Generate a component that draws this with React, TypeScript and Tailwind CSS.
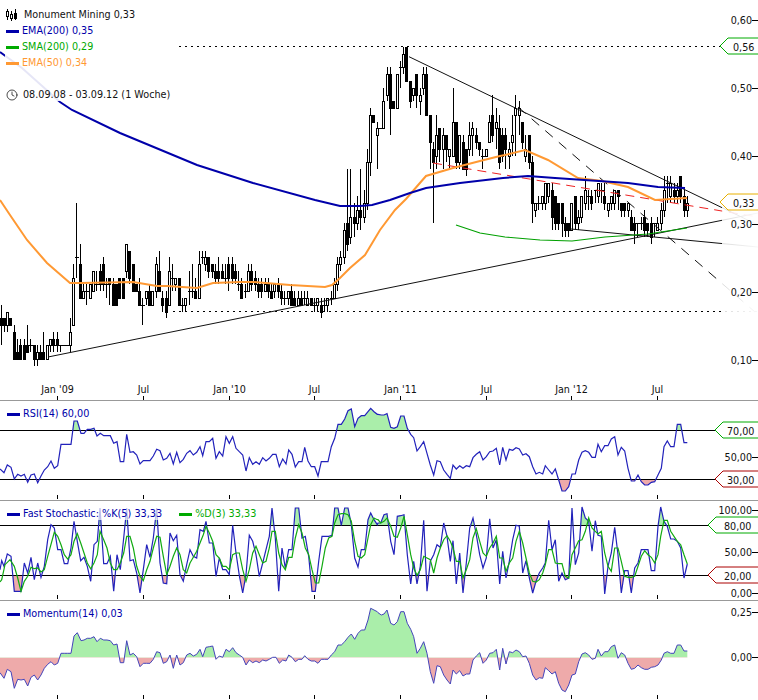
import { Clock } from "lucide-react";

const BLUE = "#0000aa";
const GREEN = "#00aa00";
const ORANGE = "#ff9933";
const UP = "#aaeeaa";
const DOWN = "#eeaaaa";

const TICKS = [57.5, 143.5, 229.5, 314.5, 400.5, 486.5, 571.5, 657.5];

// weekly candles in cents: open, close, high, low
const CANDLES: number[][] = [
  [16,15,18,12],[16,15,16,14],[15,17,17,14],[16,15,16,15],[14,10,15,10],[11,10,13,10],[12,10,13,10],[12,10,13,10],[12,11,15,11],[12,12,13,11],
  [12,10,12,9],[10,11,12,9],[11,10,12,10],[11,10,14,10],[10,12,12,10],[12,13,13,11],[13,12,14,11],[13,12,14,11],[12,12,12,11],[12,12,12,12],
  [12,12,12,12],[12,14,16,11],[15,22,24,15],[25,25,33,22],[24,19,27,19],[19,20,21,19],[20,20,21,18],[19,21,21,19],[20,23,23,20],[21,21,23,20],
  [23,21,24,20],[24,21,25,20],[21,21,22,19],[22,21,22,18],[21,18,22,18],[21,18,21,18],[22,19,22,19],[22,19,22,19],[23,27,27,22],[26,22,26,21],
  [24,20,24,20],[21,20,21,20],[20,18,22,18],[18,18,19,15],[19,20,20,18],[20,18,21,18],[18,20,20,18],[20,24,25,19],[23,20,26,20],[19,18,20,17],
  [19,17,20,16],[18,23,25,18],[22,22,24,20],[21,22,22,20],[22,18,22,18],[18,18,19,17],[18,19,19,17],[20,20,23,18],[20,20,24,19],[20,19,22,19],
  [19,24,26,19],[25,25,26,24],[24,25,26,23],[25,23,25,22],[24,23,24,22],[23,22,24,21],[23,22,25,21],[23,22,24,22],[22,22,24,21],[24,22,25,20],
  [24,22,25,21],[23,22,24,21],[21,21,23,20],[21,19,22,19],[20,20,21,19],[20,23,24,20],[23,21,24,20],[22,21,23,20],[21,20,22,19],[21,20,22,19],
  [20,21,22,20],[21,20,22,19],[20,19,21,19],[20,21,21,19],[21,20,22,19],[20,19,21,18],[19,19,20,18],[19,20,20,18],[20,18,21,18],[19,18,20,18],
  [18,19,20,18],[19,18,20,18],[19,19,20,18],[18,19,20,18],[19,18,19,18],[18,18,19,17],[18,19,19,17],[18,17,19,16],[18,18,19,17],[18,19,19,17],
  [19,19,20,18],[19,21,22,19],[21,24,25,20],[24,25,26,23],[25,29,30,24],[30,27,38,26],[28,31,38,27],[31,30,33,28],[30,32,34,29],[32,31,38,29],
  [31,33,35,30],[33,39,41,32],[39,46,47,37],[46,45,46,45],[43,44,45,38],[44,44,44,44],[44,48,50,44],[49,52,53,48],[52,47,53,43],[48,47,48,47],
  [47,52,52,47],[53,53,54,50],[53,55,56,52],[56,51,56,51],[51,48,51,47],[49,50,50,48],[52,49,52,47],[48,49,50,46],[50,52,53,49],[52,46,53,46],
  [46,42,46,38],[41,39,42,30],[40,43,46,38],[44,41,44,39],[41,43,44,38],[43,41,43,39],[40,41,41,38],[40,45,50,40],[45,39,45,38],[39,43,43,38],
  [42,38,43,38],[41,38,41,37],[41,43,45,40],[43,44,45,40],[43,42,44,41],[42,41,42,40],[40,40,41,38],[40,41,41,40],[42,45,46,42],[46,43,49,42],
  [44,45,47,41],[44,39,46,38],[43,40,44,39],[43,41,44,38],[40,41,42,38],[42,43,46,40],[46,47,49,40],[46,47,48,43],[45,42,45,41],[40,41,43,39],
  [43,39,43,38],[39,33,40,30],[32,33,33,31],[33,33,34,32],[33,34,34,32],[33,36,36,32],[34,36,36,33],[35,31,36,29],[34,30,34,29],[33,30,33,29],
  [33,30,33,28],[30,29,31,28],[30,29,30,28],[29,33,33,29],[34,30,34,29],[30,31,32,29],[31,34,34,30],[33,35,37,32],[34,34,35,32],[34,33,35,32],
  [35,35,35,33],[34,36,36,33],[35,35,36,33],[34,33,36,32],[32,33,33,31],[33,34,34,32],[33,35,35,32],[35,34,35,32],[33,32,33,31],[33,32,33,31],
  [32,33,33,31],[31,29,32,29],[30,29,31,27],[30,30,30,28],[30,30,31,29],[31,29,32,28],[30,29,30,28],[30,28,31,27],[30,30,30,28],[29,30,31,29],
  [30,32,33,29],[32,35,37,31],[36,36,37,33],[34,36,37,33],[35,34,36,33],[34,35,36,33],[37,34,37,33],[34,32,35,31],[32,33,34,31],
];

const EMA200 = "0,52 22,68 60,102 72,110 120,133 197,165 253,183 315,200 340,206 360,206 372,205 390,200 410,193 426,188 460,183 503,178 528,176 555,178 628,183 658,187 685,188";
const EMA50 = "0,200 10,215 27,240 47,263 70,283 80,283 133,282 157,286 167,286 197,288 213,283 240,282 253,282 290,285 325,287 332,285 340,278 350,268 365,255 380,230 395,210 406,199 426,176 453,168 480,161 500,156 505,155 525,150 548,160 578,178 602,181 628,187 655,200 687,198";
const SMA200 = "456,225 480,233 505,237 540,240 572,241 605,237 648,234 687,228";

const RSI_A = [0,222,12,233,22,210,33,217,43,252,53,238,63,243,73,238,83,262,93,240,103,237,113,263,123,243,133,225,143,215,153,198,163,220,173,212,183,148,193,148,203,148,213,148,222,78,232,78,243,115,252,115,262,103,272,103,282,100,291,123,301,115,311,122,321,122,331,122,341,145,351,140,361,200,371,200,380,118,390,172,400,170,410,180,420,207,430,197,440,197,450,197,460,183,470,163,480,167,490,195,500,190,510,175,520,207,530,172,540,203,550,193,560,175,570,167,580,180,590,172,600,155,608,182,618,140,628,140,638,130,648,190,658,170,668,183,678,125,688,145,698,125,708,160,718,170,728,180,738,228,748,188,758,208,768,200,778,208,788,188,798,198,808,190,818,178,828,178,838,215,848,192,858,207,866,165,876,178,886,216,896,200,906,200,914,157,924,198,934,215,944,215,954,243,964,200,974,200,984,200,994,155,1004,130,1014,88,1024,88,1034,72,1044,47,1054,42,1064,95,1074,70,1084,62,1094,62,1104,50,1112,40,1122,50,1132,58];
const RSI_B = [0,58,10,60,18,60,27,56,38,97,48,100,58,95,68,63,78,63,88,100,98,118,107,128,117,168,127,155,137,140,147,175,157,210,167,240,177,197,187,200,197,225,207,238,217,250,225,210,235,222,245,212,255,220,265,212,275,215,285,188,295,178,305,170,315,195,325,185,335,170,345,168,355,160,365,210,374,157,384,195,394,163,404,166,414,158,424,162,434,180,444,176,454,185,464,215,474,237,484,232,494,237,502,212,512,225,522,237,532,222,542,255,552,288,562,288,572,275,582,237,592,237,602,195,612,172,622,167,632,172,642,187,652,187,660,148,670,170,680,152,690,152,700,132,710,125,720,180,730,157,740,168,750,220,760,258,770,258,780,240,790,260,800,270,810,270,820,262,830,260,840,240,850,220,858,155,868,138,878,155,888,155,898,88,908,88,918,143,928,143];

const K_A = [0,215,5,188,12,205,22,168,33,175,43,280,53,280,63,280,73,195,83,225,93,178,103,245,113,195,123,238,133,205,143,125,153,80,163,90,173,155,183,155,193,197,203,197,213,150,222,70,232,130,242,188,252,178,262,205,272,250,282,140,292,130,300,30,311,197,321,197,331,175,341,280,351,170,361,215,371,120,380,30,390,188,400,185,410,225,420,285,430,215,440,140,450,178,460,120,470,30,480,195,490,255,500,257,510,105,520,128,530,112,540,230,550,250,560,200,570,155,580,175,590,180,600,95,610,100,618,70,628,135,638,135,648,235,658,180,668,215,678,215,688,230,698,82,708,165,718,232,728,285,738,230,748,112,758,130,768,170,778,235,788,195,798,155,808,115,816,30,826,120,836,280,846,150,856,210,866,155,876,155,886,30,896,30,906,120,916,115,926,175,936,280,946,280,956,190,966,115,976,115,986,115,996,112,1004,30,1014,30,1024,82,1034,30,1044,30,1054,80,1064,180,1074,207,1084,155,1094,155,1104,65,1112,45,1122,65,1132,80];
const K_B = [0,75,8,75,18,50,27,47,38,130,48,170,58,55,68,53,78,50,88,170,98,258,107,190,117,258,127,205,137,67,147,280,157,190,167,170,177,140,187,148,197,75,207,115,217,190,225,128,235,258,245,165,255,285,265,195,275,90,285,60,295,110,305,170,315,210,325,180,335,62,345,150,355,125,365,258,374,160,384,240,394,190,404,125,414,82,424,85,434,225,444,188,454,240,464,285,474,250,484,225,494,210,502,195,512,67,522,155,532,125,542,250,552,225,562,245,572,240,582,30,592,200,602,165,612,27,622,60,632,70,642,160,652,68,660,112,670,115,680,288,690,205,700,165,710,88,720,170,730,285,740,218,750,218,760,285,770,210,780,195,790,155,800,155,810,155,820,218,830,218,840,85,848,27,858,70,868,85,878,123,888,123,898,130,908,150,918,240,928,198];
const D_A = [0,252,5,245,15,200,30,185,43,205,53,240,63,280,73,250,83,235,93,208,103,212,113,210,123,222,133,215,143,175,163,103,173,115,183,140,193,170,203,183,213,170,222,130,232,107,242,135,252,165,262,195,272,212,282,195,292,170,300,100,311,125,321,150,331,195,341,215,351,215,361,195,371,165,380,115,390,115,400,150,410,205,420,235,430,248,440,215,450,190,460,150,470,115,480,118,490,175,500,230,510,205,520,175,530,150,540,170,550,215,560,225,570,195,580,178,590,160,600,135,610,110,618,85,628,105,638,130,648,170,658,180,668,205,678,205,688,215,698,170,708,165,718,165,728,215,738,250,748,215,758,165,768,145,778,170,788,195,798,190,808,150,816,100,826,100,836,165,846,200,856,215,866,178,876,178,886,120,896,80,906,105,916,150,926,170,936,215,946,255,956,255,966,205,976,150,986,120,996,115,1004,75,1014,50,1024,47,1034,47,1044,50,1054,70,1064,130,1074,175,1084,180,1094,170,1104,120,1112,80,1122,60,1132,65];
const D_B = [0,65,8,75,18,70,27,60,38,85,48,115,58,118,68,90,78,55,88,110,98,170,107,210,117,232,127,215,137,175,147,180,157,185,167,225,177,180,187,150,197,125,207,113,217,130,225,150,235,190,245,190,255,240,265,215,275,185,285,120,295,92,305,130,315,165,325,175,335,150,345,135,355,115,365,180,374,180,384,220,394,195,404,180,414,130,424,100,434,135,444,180,454,225,464,250,474,252,484,245,494,225,502,200,512,155,522,155,532,195,542,197,552,197,562,235,572,240,582,170,592,150,602,128,612,125,622,100,632,60,642,90,652,100,660,108,670,100,680,165,690,205,700,220,710,150,720,150,730,190,740,235,750,238,760,238,770,235,780,205,790,175,800,158,810,170,820,178,830,195,840,170,848,115,858,67,868,67,878,100,888,115,898,130,908,140,918,170,928,198];

const MOM_A = [0,218,12,235,22,208,33,215,43,265,53,238,63,240,73,238,83,258,93,232,103,225,113,240,123,225,133,205,143,193,153,185,163,195,173,190,183,160,193,160,203,160,213,160,222,108,232,98,243,122,252,120,262,115,272,115,282,110,291,125,301,115,311,120,321,120,331,122,341,135,351,132,361,188,371,188,380,122,390,165,400,160,410,170,420,200,430,190,440,190,450,190,460,178,470,155,480,158,490,190,500,185,510,165,520,205,530,165,540,195,550,188,560,165,570,160,580,168,590,163,600,148,608,170,618,142,628,140,638,138,648,178,658,168,668,172,678,148,688,155,698,143,708,158,718,165,728,172,738,195,748,180,758,188,768,183,778,188,788,180,798,183,808,178,818,172,828,172,838,190,848,180,858,183,866,165,876,172,886,185,896,178,906,178,914,167,924,178,934,183,944,183,954,190,964,178,974,178,984,178,994,165,1004,155,1014,135,1024,135,1034,125,1044,112,1054,102,1064,118,1074,100,1084,90,1094,90,1104,60,1112,25,1122,30,1132,35];
const MOM_B = [0,38,10,45,18,42,27,30,38,70,48,75,58,65,68,35,78,35,88,70,98,88,107,110,117,160,127,145,137,125,147,160,157,215,167,250,177,197,187,200,197,225,207,240,217,252,225,210,235,222,245,212,255,228,265,222,275,222,285,180,295,168,305,158,315,190,325,180,335,160,345,158,355,148,365,210,374,145,384,192,394,155,404,158,414,150,424,155,434,170,444,168,454,190,464,225,474,240,484,233,494,235,502,203,512,212,522,222,532,215,542,250,552,270,562,275,572,255,582,225,592,222,602,185,612,162,622,158,632,165,642,178,652,175,660,148,670,168,680,155,690,155,700,140,710,135,720,175,730,158,740,165,750,190,760,208,770,205,780,195,790,203,800,208,810,208,820,202,830,200,840,195,850,180,858,160,868,155,878,160,888,160,898,135,908,135,918,153,928,153];

// traced series come as pairs measured on two 3x crops of the pane
function series(left: number[], right: number[], top: number) {
  const pts: number[][] = [];
  for (let i = 0; i < left.length; i += 2) pts.push([left[i] / 3, top + left[i + 1] / 3]);
  for (let i = 0; i < right.length; i += 2) {
    const x = 378 + right[i] / 3;
    if (x > left[left.length - 2] / 3) pts.push([x, top + right[i + 1] / 3]);
  }
  return pts;
}

const toPoints = (pts: number[][]) => pts.map((p) => `${p[0].toFixed(1)},${p[1].toFixed(1)}`).join(" ");

function priceY(cents: number) {
  return Math.round(359 - (cents - 10) * 6.78);
}

function Candles() {
  return (
    <g shapeRendering="crispEdges">
      {CANDLES.map(([o, c, h, l], i) => {
        const x = Math.floor(1 + i * 3.3) + 0.5;
        const top = priceY(Math.max(o, c));
        const bottom = priceY(Math.min(o, c));
        return (
          <g key={i}>
            <line x1={x} x2={x} y1={priceY(h)} y2={priceY(l)} stroke="#000" />
            {o === c ? (
              <line x1={x - 2} x2={x + 2} y1={top + 0.5} y2={top + 0.5} stroke="#000" />
            ) : (
              <rect x={x - 1} y={top + 0.5} width={2} height={bottom - top} fill={c > o ? "#fff" : "#000"} stroke="#000" />
            )}
          </g>
        );
      })}
    </g>
  );
}

function AxisTicks({ y }: { y: number }) {
  return (
    <g shapeRendering="crispEdges">
      {TICKS.map((x) => (
        <line key={x} x1={x} x2={x} y1={y} y2={y + 4} stroke="#000" />
      ))}
    </g>
  );
}

function AxisLabel({ y, text, tick = true }: { y: number; text: string; tick?: boolean }) {
  return (
    <g>
      <text x={752} y={y + 3.5} textAnchor="end" fontSize={9.6} fill="#111">
        {text}
      </text>
      {tick && <line x1={752} x2={758} y1={y + 0.5} y2={y + 0.5} stroke="#000" shapeRendering="crispEdges" />}
    </g>
  );
}

function Tag({ tip, y, color, text, tx, w = 8 }: { tip: number; y: number; color: string; text: string; tx: number; w?: number }) {
  return (
    <g>
      <polyline points={`758,${y - 8} ${tip + w},${y - 8} ${tip},${y} ${tip + w},${y + 8} 758,${y + 8}`} fill="#fff" stroke={color} strokeWidth={1} />
      <text x={tx} y={y + 5} fontSize={9.6} fill="#111">
        {text}
      </text>
    </g>
  );
}

function Filled({ id, pts, top, bottom, level, color, above }: { id: string; pts: number[][]; top: number; bottom: number; level: number; color: string; above: boolean }) {
  const last = pts[pts.length - 1][0];
  const first = pts[0][0];
  return (
    <>
      <clipPath id={id}>
        {above ? <rect x={0} y={top} width={758} height={level - top} /> : <rect x={0} y={level} width={758} height={bottom - level} />}
      </clipPath>
      <polygon points={`${first},${level} ${toPoints(pts)} ${last},${level}`} fill={color} clipPath={`url(#${id})`} />
    </>
  );
}

function Swatch({ color }: { color: string }) {
  return <span className="h-[3px] w-[13px]" style={{ backgroundColor: color }} />;
}

function PaneLegend({ items, top }: { items: { label: string; color: string }[]; top: string }) {
  return (
    <div className={`absolute left-[7px] flex items-center gap-[17px] bg-white/70 text-[9.7px] leading-3 ${top}`}>
      {items.map((item) => (
        <span key={item.label} className="flex items-center gap-[3px]" style={{ color: item.color }}>
          <Swatch color={item.color} />
          <span className="whitespace-pre">{item.label}</span>
        </span>
      ))}
    </div>
  );
}

function CandleIcon() {
  return (
    <svg width="12" height="12" viewBox="0 0 12 12" fill="none" stroke="#000" strokeWidth="1" shapeRendering="crispEdges">
      <path d="M1.5 0v11M5.5 2v10M9.5 0v11" />
      <rect x="0.5" y="2.5" width="2" height="5" fill="#fff" />
      <rect x="4.5" y="5.5" width="2" height="4" fill="#fff" />
      <rect x="8.5" y="4.5" width="2" height="5" fill="#000" />
    </svg>
  );
}

function MainPane() {
  return (
    <div className="relative h-[401px] border-b border-[#999]">
      <svg width="758" height="400" viewBox="0 0 758 400" className="block" fontFamily="'DejaVu Sans', sans-serif">
        <defs>
          <linearGradient id="fade" x1="0" x2="1" y1="0" y2="0">
            <stop offset="0" stopColor="#fff" stopOpacity="0.85" />
            <stop offset="1" stopColor="#fff" stopOpacity="0.97" />
          </linearGradient>
        </defs>
        <Candles />
        <line x1={179} x2={722} y1={46.5} y2={46.5} stroke="#000" strokeDasharray="2 4" />
        <line x1={173} x2={758} y1={311.5} y2={311.5} stroke="#000" strokeDasharray="2 4" />
        <line x1={50} x2={71} y1={345.5} y2={345.5} stroke="#000" strokeDasharray="2 2" />
        <line x1={48} y1={357} x2={758} y2={213} stroke="#111" />
        <line x1={409} y1={56.7} x2={758} y2={225} stroke="#111" />
        <line x1={571} y1={229} x2={758} y2={247} stroke="#111" />
        <line x1={518} y1={107} x2={755} y2={312} stroke="#111" strokeDasharray="10 8" />
        <line x1={433} y1={163} x2={758} y2={217} stroke="#ee2222" strokeDasharray="9 6" />
        <polyline points={SMA200} fill="none" stroke="#00a000" strokeWidth={1.2} />
        <polyline points={EMA50} fill="none" stroke={ORANGE} strokeWidth={2} />
        <polyline points={EMA200} fill="none" stroke={BLUE} strokeWidth={2} />
        <rect x={722} y={60} width={36} height={290} fill="url(#fade)" />
        <AxisLabel y={20} text="0,60" />
        <AxisLabel y={88} text="0,50" />
        <AxisLabel y={156} text="0,40" />
        <AxisLabel y={224} text="0,30" />
        <AxisLabel y={292} text="0,20" />
        <AxisLabel y={360} text="0,10" />
        <Tag tip={720} y={46} color="#00aa00" text="0,56" tx={733} />
        <Tag tip={720} y={202} color="#e8b000" text="0,33" tx={733} />
        {TICKS.map((x, i) => (
          <text key={x} x={x} y={393} textAnchor="middle" fontSize={9.6} fill="#111">
            {["Jan '09", "Jul", "Jan '10", "Jul", "Jan '11", "Jul", "Jan '12", "Jul"][i]}
          </text>
        ))}
        <AxisTicks y={396} />
      </svg>
      <div className="absolute left-[5px] top-[7px] flex h-[94px] w-[169px] flex-col bg-white/90 pl-px text-[9.65px] leading-4">
        <div className="flex h-4 items-center gap-[6px] text-[#111]">
          <CandleIcon />
          <span>Monument Mining 0,33</span>
        </div>
        <div className="flex h-4 items-center gap-[3px] text-[#0000aa]">
          <Swatch color={BLUE} />
          <span>EMA(200) 0,35</span>
        </div>
        <div className="flex h-4 items-center gap-[3px] text-[#00aa00]">
          <Swatch color={GREEN} />
          <span>SMA(200) 0,29</span>
        </div>
        <div className="flex h-4 items-center gap-[3px] text-[#ff9933]">
          <Swatch color={ORANGE} />
          <span>EMA(50) 0,34</span>
        </div>
        <div className="mt-4 flex h-4 items-center gap-[5px] text-[#111]">
          <Clock size={12} strokeWidth={1.4} color="#000" />
          <span>08.09.08 - 03.09.12 (1 Woche)</span>
        </div>
      </div>
    </div>
  );
}

function RsiPane() {
  const pts = series(RSI_A, RSI_B, 395);
  return (
    <div className="relative h-[100px] border-b border-[#999]">
      <svg width="758" height="99" viewBox="0 401 758 99" className="block" fontFamily="'DejaVu Sans', sans-serif">
        <Filled id="rsi-up" pts={pts} top={401} bottom={500} level={430} color={UP} above />
        <Filled id="rsi-down" pts={pts} top={401} bottom={500} level={479} color={DOWN} above={false} />
        <line x1={0} x2={716} y1={430.5} y2={430.5} stroke="#000" shapeRendering="crispEdges" />
        <line x1={0} x2={716} y1={479.5} y2={479.5} stroke="#000" shapeRendering="crispEdges" />
        <polyline points={toPoints(pts)} fill="none" stroke="#2222bb" strokeWidth={1.2} />
        <AxisLabel y={457} text="50,00" />
        <Tag tip={715} y={430} color="#00aa00" text="70,00" tx={727} />
        <Tag tip={715} y={479} color="#aa0000" text="30,00" tx={727} />
        <AxisTicks y={495} />
      </svg>
      <PaneLegend top="top-[7px]" items={[{ label: "RSI(14) 60,00", color: BLUE }]} />
    </div>
  );
}

function StochasticPane() {
  const k = series(K_A, K_B, 498);
  const d = series(D_A, D_B, 498);
  return (
    <div className="relative h-[100px] border-b border-[#999]">
      <svg width="758" height="99" viewBox="0 501 758 99" className="block" fontFamily="'DejaVu Sans', sans-serif">
        <Filled id="sto-up" pts={k} top={501} bottom={600} level={525} color={UP} above />
        <Filled id="sto-down" pts={k} top={501} bottom={600} level={575} color={DOWN} above={false} />
        <line x1={0} x2={708} y1={525.5} y2={525.5} stroke="#000" shapeRendering="crispEdges" />
        <line x1={0} x2={708} y1={575.5} y2={575.5} stroke="#000" shapeRendering="crispEdges" />
        <polyline points={toPoints(k)} fill="none" stroke="#2222bb" strokeWidth={1.2} />
        <polyline points={toPoints(d)} fill="none" stroke="#11aa11" strokeWidth={1.2} />
        <AxisLabel y={510} text="100,00" />
        <AxisLabel y={552} text="50,00" />
        <AxisLabel y={593} text="0,00" />
        <Tag tip={708} y={525} color="#00aa00" text="80,00" tx={724} />
        <Tag tip={708} y={575} color="#aa0000" text="20,00" tx={724} />
        <AxisTicks y={595} />
      </svg>
      <PaneLegend
        top="top-[7px]"
        items={[
          { label: "Fast Stochastic: %K(5) 33,33", color: BLUE },
          { label: "%D(3) 33,33", color: GREEN },
        ]}
      />
    </div>
  );
}

function MomentumPane() {
  const pts = series(MOM_A, MOM_B, 600);
  return (
    <div className="relative h-[99px]">
      <svg width="758" height="99" viewBox="0 601 758 99" className="block" fontFamily="'DejaVu Sans', sans-serif">
        <Filled id="mom-up" pts={pts} top={601} bottom={700} level={657.5} color={UP} above />
        <Filled id="mom-down" pts={pts} top={601} bottom={700} level={657.5} color={DOWN} above={false} />
        <polyline points={toPoints(pts)} fill="none" stroke="#4444bb" strokeWidth={1} />
        <AxisLabel y={612} text="0,25" />
        <AxisLabel y={657} text="0,00" />
        <AxisTicks y={695} />
      </svg>
      <PaneLegend top="top-[7px]" items={[{ label: "Momentum(14) 0,03", color: BLUE }]} />
    </div>
  );
}

export default function App() {
  return (
    <div className="flex h-[700px] w-[758px] flex-col overflow-hidden bg-white font-['DejaVu_Sans',sans-serif]">
      <MainPane />
      <RsiPane />
      <StochasticPane />
      <MomentumPane />
    </div>
  );
}
